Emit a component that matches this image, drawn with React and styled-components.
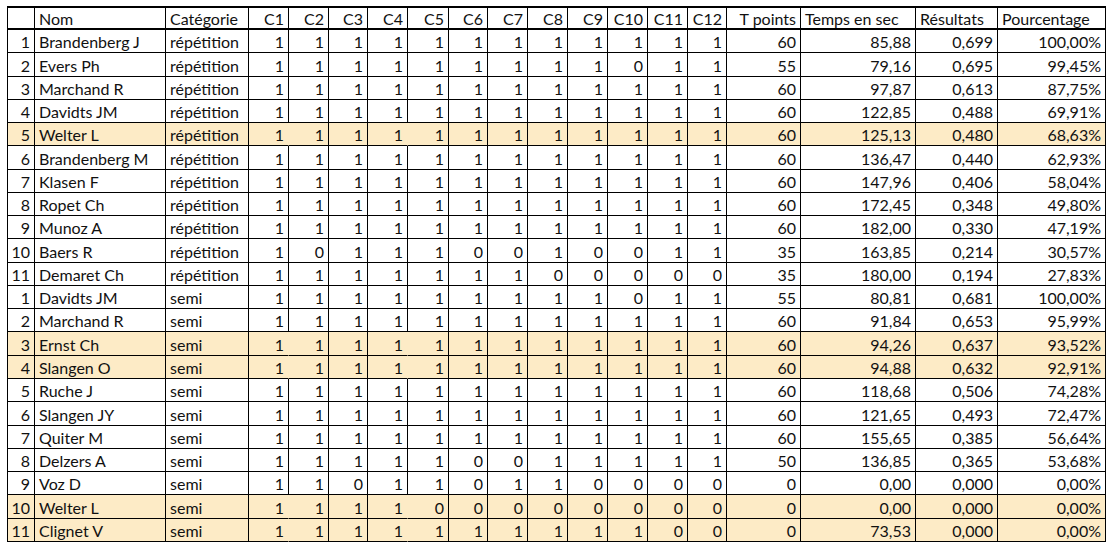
import React from 'react';
import styled, { createGlobalStyle } from 'styled-components';

const GlobalStyle = createGlobalStyle`
  body {
    margin: 0;
    background: #fff;
    font-family: Lato, "Open Sans", sans-serif;
    color: #111;
  }
`;

const colWidths = [27, 131, 83, 40, 40, 39, 40, 41, 39, 40, 40, 40, 40, 40, 39, 74, 115, 82, 108];

const Page = styled.div`
  padding: 6px 0 0 7px;
`;

const Sheet = styled.div`
  display: grid;
  grid-template-columns: ${colWidths.map(w => `${w}px`).join(' ')};
  grid-template-rows: 22px repeat(22, 23.27px);
  width: max-content;
  border-top: 2px solid #000;
  border-left: 1px solid #000;
  font-size: 16px;
`;

const Cell = styled.div`
  box-sizing: border-box;
  display: flex;
  align-items: flex-end;
  justify-content: ${p => (p.$left ? 'flex-start' : 'flex-end')};
  padding: 0 4px ${p => (p.$head ? '1px' : '2px')} 4px;
  border-right: 1px solid ${p => (p.$noRight ? 'transparent' : '#000')};
  border-bottom: ${p => (p.$head ? '2px' : '1px')} solid #000;
  background: ${p => (p.$hl ? '#fdebc6' : '#fff')};
  white-space: nowrap;
  overflow: hidden;
  line-height: 1;
`;

const headers = ['', 'Nom', 'Catégorie', 'C1', 'C2', 'C3', 'C4', 'C5', 'C6', 'C7', 'C8', 'C9', 'C10', 'C11', 'C12', 'T points', 'Temps en sec', 'Résultats', 'Pourcentage'];
const leftHeads = ['Nom', 'Catégorie', 'Temps en sec', 'Résultats', 'Pourcentage'];

const all = '111111111111';

const rows = [
  [1, 'Brandenberg J', 'répétition', all, 60, '85,88', '0,699', '100,00%'],
  [2, 'Evers Ph', 'répétition', '111111111011', 55, '79,16', '0,695', '99,45%'],
  [3, 'Marchand R', 'répétition', all, 60, '97,87', '0,613', '87,75%'],
  [4, 'Davidts JM', 'répétition', all, 60, '122,85', '0,488', '69,91%'],
  [5, 'Welter L', 'répétition', all, 60, '125,13', '0,480', '68,63%', true],
  [6, 'Brandenberg M', 'répétition', all, 60, '136,47', '0,440', '62,93%'],
  [7, 'Klasen F', 'répétition', all, 60, '147,96', '0,406', '58,04%'],
  [8, 'Ropet Ch', 'répétition', all, 60, '172,45', '0,348', '49,80%'],
  [9, 'Munoz A', 'répétition', all, 60, '182,00', '0,330', '47,19%'],
  [10, 'Baers R', 'répétition', '101110010011', 35, '163,85', '0,214', '30,57%'],
  [11, 'Demaret Ch', 'répétition', '111111100000', 35, '180,00', '0,194', '27,83%'],
  [1, 'Davidts JM', 'semi', '111111111011', 55, '80,81', '0,681', '100,00%'],
  [2, 'Marchand R', 'semi', all, 60, '91,84', '0,653', '95,99%'],
  [3, 'Ernst Ch', 'semi', all, 60, '94,26', '0,637', '93,52%', true],
  [4, 'Slangen O', 'semi', all, 60, '94,88', '0,632', '92,91%', true],
  [5, 'Ruche J', 'semi', all, 60, '118,68', '0,506', '74,28%'],
  [6, 'Slangen JY', 'semi', all, 60, '121,65', '0,493', '72,47%'],
  [7, 'Quiter M', 'semi', all, 60, '155,65', '0,385', '56,64%'],
  [8, 'Delzers A', 'semi', '111110011111', 50, '136,85', '0,365', '53,68%'],
  [9, 'Voz D', 'semi', '110110110000', 0, '0,00', '0,000', '0,00%'],
  [10, 'Welter L', 'semi', '111100000000', 0, '0,00', '0,000', '0,00%', true],
  [11, 'Clignet V', 'semi', '111111111100', 0, '73,53', '0,000', '0,00%', true],
];

// highlighted rows lose a couple of inner gridlines in the C block
const hiddenInHl = [3, 6];

export default function App() {
  return (
    <Page>
      <GlobalStyle />
      <Sheet>
        {headers.map((h, i) => (
          <Cell key={`h${i}`} $head $left={leftHeads.includes(h)}>{h}</Cell>
        ))}
        {rows.map(([n, name, cat, scores, pts, time, res, pct, hl], r) => {
          const cells = [n, name, cat, ...scores.split(''), pts, time, res, pct];
          return cells.map((v, i) => (
            <Cell
              key={`${r}-${i}`}
              $hl={hl}
              $left={i === 1 || i === 2}
              $noRight={hl && hiddenInHl.includes(i)}
            >
              {v}
            </Cell>
          ));
        })}
      </Sheet>
    </Page>
  );
}
